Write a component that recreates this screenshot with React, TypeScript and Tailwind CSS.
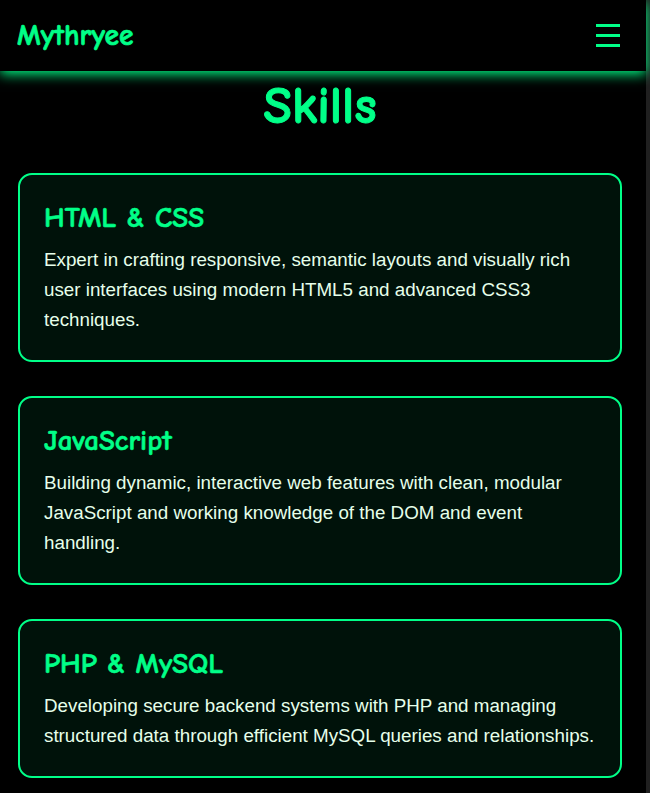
import React from "react";

const skills = [
  {
    title: "HTML & CSS",
    text: "Expert in crafting responsive, semantic layouts and visually rich user interfaces using modern HTML5 and advanced CSS3 techniques.",
  },
  {
    title: "JavaScript",
    text: "Building dynamic, interactive web features with clean, modular JavaScript and working knowledge of the DOM and event handling.",
  },
  {
    title: "PHP & MySQL",
    text: "Developing secure backend systems with PHP and managing structured data through efficient MySQL queries and relationships.",
  },
];

const comic = { fontFamily: '"Comic Sans MS", "Comic Neue", "Chalkboard SE", cursive' };

export default function App() {
  return (
    <div className="flex min-h-[793px] w-[650px] bg-black">
      <div className="w-[646px] bg-black">
        <header className="relative z-10 flex h-[71px] items-center justify-between bg-black pl-[17px] pr-[26px] shadow-[0_3px_12px_#00ff88]">
          <div
            className="text-[29.5px] font-bold leading-none text-[#00ff88] [-webkit-text-stroke:0.7px_#00ff88]"
            style={comic}
          >
            Mythryee
          </div>
          <div className="flex w-[24px] flex-col gap-[7px]">
            <span className="block h-[3px] bg-[#00ff88]" />
            <span className="block h-[3px] bg-[#00ff88]" />
            <span className="block h-[3px] bg-[#00ff88]" />
          </div>
        </header>
        <section className="pb-[16px] pl-[18px] pr-[24px] pt-[7px]">
          <h2
            className="mb-[39px] text-center text-[52px] font-bold leading-[56px] text-[#00ff88] [-webkit-text-stroke:1px_#00ff88]"
            style={comic}
          >
            Skills
          </h2>
          <div className="flex flex-col gap-[34px]">
            {skills.map((s) => (
              <div
                key={s.title}
                className="rounded-[14px] border-2 border-[#00ff88] bg-[#00120a] px-[24px] pb-[25px] pt-[25px]"
              >
                <h3
                  className="mb-[9px] text-[29px] font-bold leading-[36px] text-[#00ff88] [-webkit-text-stroke:0.6px_#00ff88]"
                  style={comic}
                >
                  {s.title}
                </h3>
                <p
                  className="text-[18.8px] leading-[30px] text-[#e6ffea]"
                  style={{ fontFamily: '"Liberation Sans", Arial, sans-serif' }}
                >
                  {s.text}
                </p>
              </div>
            ))}
          </div>
        </section>
      </div>
      <div className="w-[4px] bg-[#202020]" />
    </div>
  );
}
